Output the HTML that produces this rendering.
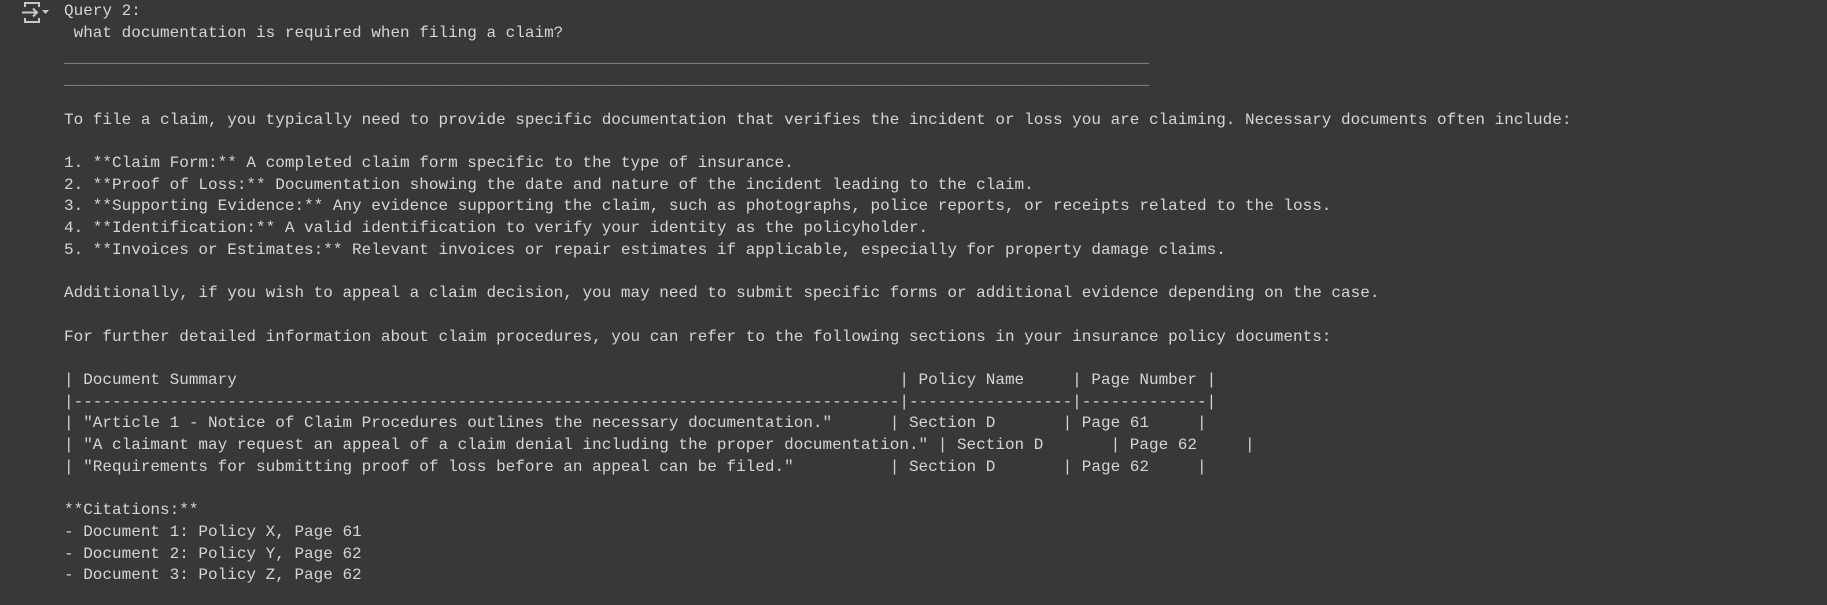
<!DOCTYPE html>
<html><head><meta charset="utf-8"><style>
html,body{margin:0;padding:0;background:#383838;width:1827px;height:605px;overflow:hidden}
pre{position:absolute;left:64px;top:1px;margin:0;font-family:"Liberation Mono",monospace;font-size:16px;line-height:21.7px;color:#d5d5d5;white-space:pre}
.u{color:#9a9a9a;position:relative;top:4px}
svg{position:absolute;left:20px;top:1px}
</style></head><body>
<svg width="30" height="24" viewBox="0 0 30 24"><g fill="none" stroke="#c8c8c8" stroke-width="2"><path d="M5 6V2h14v4"/><path d="M5 17v4h14v-4"/><path d="M2 11.5h15M13 7.5l4 4-4 4"/></g><path d="M22 9h7l-3.5 4z" fill="#c8c8c8"/></svg>
<pre>Query 2:
 what documentation is required when filing a claim?
<span class="u">_________________________________________________________________________________________________________________</span>
<span class="u">_________________________________________________________________________________________________________________</span>

To file a claim, you typically need to provide specific documentation that verifies the incident or loss you are claiming. Necessary documents often include:

1. **Claim Form:** A completed claim form specific to the type of insurance.
2. **Proof of Loss:** Documentation showing the date and nature of the incident leading to the claim.
3. **Supporting Evidence:** Any evidence supporting the claim, such as photographs, police reports, or receipts related to the loss.
4. **Identification:** A valid identification to verify your identity as the policyholder.
5. **Invoices or Estimates:** Relevant invoices or repair estimates if applicable, especially for property damage claims.

Additionally, if you wish to appeal a claim decision, you may need to submit specific forms or additional evidence depending on the case.

For further detailed information about claim procedures, you can refer to the following sections in your insurance policy documents:

| Document Summary                                                                     | Policy Name     | Page Number |
|--------------------------------------------------------------------------------------|-----------------|-------------|
| "Article 1 - Notice of Claim Procedures outlines the necessary documentation."      | Section D       | Page 61     |
| "A claimant may request an appeal of a claim denial including the proper documentation." | Section D       | Page 62     |
| "Requirements for submitting proof of loss before an appeal can be filed."          | Section D       | Page 62     |

**Citations:**
- Document 1: Policy X, Page 61
- Document 2: Policy Y, Page 62
- Document 3: Policy Z, Page 62</pre>
</body></html>
